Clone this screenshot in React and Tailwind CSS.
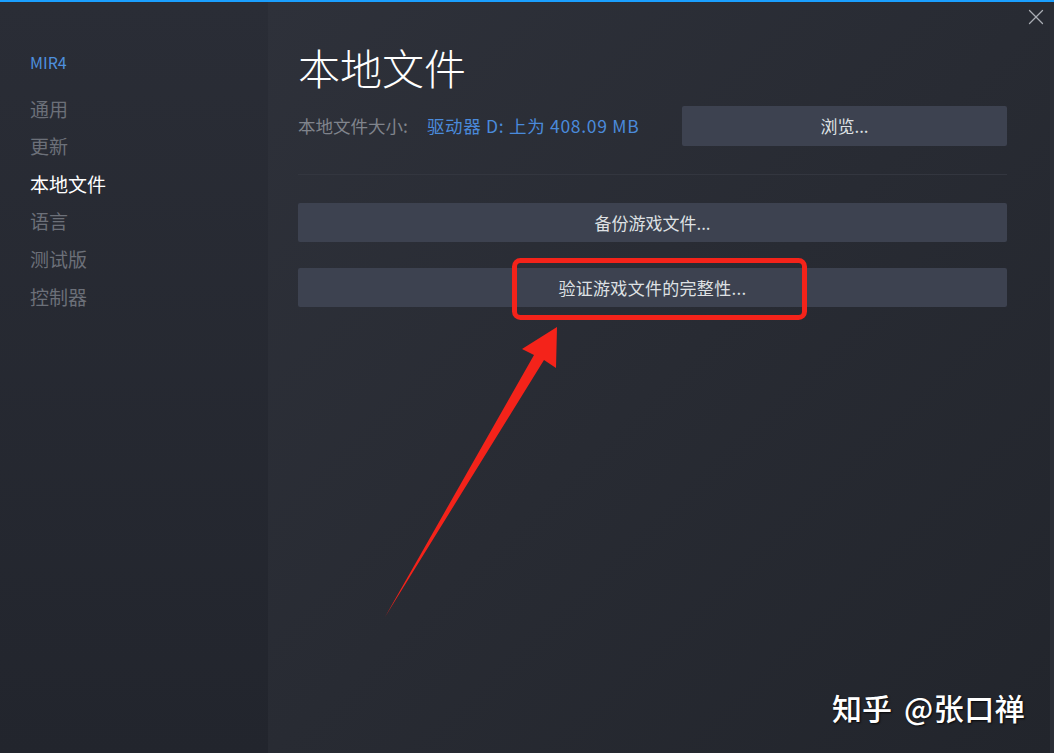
import { X } from 'lucide-react'

const navItems = ['通用', '更新', '本地文件', '语言', '测试版', '控制器']

function Arrow() {
  // red annotation arrow + box drawn over the dialog
  return (
    <svg className="absolute inset-0 pointer-events-none" width="1054" height="753" viewBox="0 0 1054 753">
      <rect x="514.5" y="260.5" width="290" height="57" rx="6" fill="none" stroke="#f4231a" strokeWidth="5" />
      <polygon points="557,327 522,349 534,355 385,617 544,360 556,368" fill="#f4231a" />
    </svg>
  )
}

export default function App() {
  return (
    <div
      className="relative w-[1054px] h-[753px] overflow-hidden flex"
      style={{ fontFamily: '"Noto Sans CJK SC", "Noto Sans", sans-serif' }}
    >
      {/* sidebar */}
      <div className="w-[268px] h-full bg-gradient-to-b from-[#2a2d36] to-[#22252d] pl-[30px] pt-[51px]">
        <div className="text-[16px] leading-[22px] text-[#4e90de]">MIR4</div>
        <div className="mt-[17px] flex flex-col">
          {navItems.map((n) => (
            <div
              key={n}
              className={
                'h-[37.6px] flex items-center text-[19px] ' +
                (n === '本地文件' ? 'text-white' : 'text-[#6c7079]')
              }
            >
              {n}
            </div>
          ))}
        </div>
      </div>

      {/* main panel */}
      <div className="flex-1 h-full bg-gradient-to-br from-[#2e313a] via-[#282b33] to-[#22252c] pl-[30px] pr-[43px] pt-[38px]">
        <h1 className="text-[42px] leading-[58px] font-light text-white">本地文件</h1>
        <div className="mt-[10px] flex items-center h-[40px]">
          <div className="flex-1 flex items-center text-[17.5px]">
            <span className="text-[#80848c]">本地文件大小:</span>
            <span className="ml-[19px] tracking-[0.7px] text-[#4a8adb]">驱动器 D: 上为 408.09 MB</span>
          </div>
          <div className="w-[325px] h-[40px] rounded-[2px] bg-[#3d4250] flex items-center justify-center text-[17px] text-[#dfe1e4]">
            浏览...
          </div>
        </div>
        <div className="mt-[28px] h-px bg-[#33363f]" />
        <div className="mt-[28px] h-[39px] rounded-[2px] bg-[#3d4250] flex items-center justify-center text-[17px] text-[#dfe1e4]">
          备份游戏文件...
        </div>
        <div className="mt-[26px] h-[39px] rounded-[2px] bg-[#3d4250] flex items-center justify-center text-[17px] tracking-[0.3px] text-[#dfe1e4]">
          验证游戏文件的完整性...
        </div>
      </div>
      <div className="w-[4px] h-full bg-[#2b2e36]" />

      <div className="absolute top-0 left-0 right-0 h-[2px] bg-[#1a9fff]" />
      <X className="absolute top-[4px] left-[1023px] w-[26px] h-[26px] text-[#a9adb3]" strokeWidth={1.2} />

      <Arrow />

      {/* watermark */}
      <div className="absolute left-[832px] top-[686px] flex gap-[12px] text-[30px] leading-[42px] font-medium text-white [text-shadow:1px_1px_2px_rgba(0,0,0,0.8)]">
        <span>知乎</span>
        <span className="tracking-[0.5px]">@张口禅</span>
      </div>
    </div>
  )
}
